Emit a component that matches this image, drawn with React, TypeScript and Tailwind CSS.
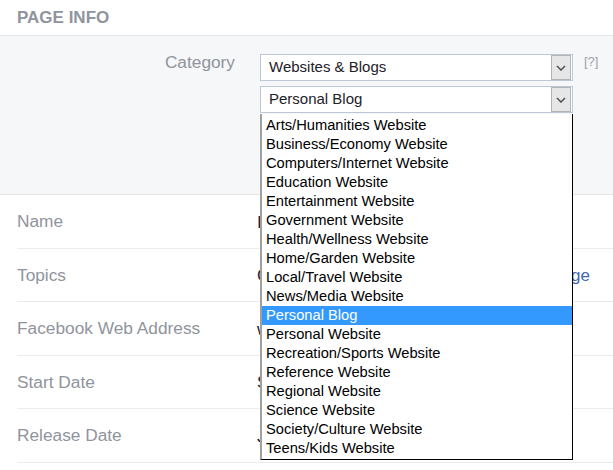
import React from "react";

const OPTIONS = [
  "Arts/Humanities Website",
  "Business/Economy Website",
  "Computers/Internet Website",
  "Education Website",
  "Entertainment Website",
  "Government Website",
  "Health/Wellness Website",
  "Home/Garden Website",
  "Local/Travel Website",
  "News/Media Website",
  "Personal Blog",
  "Personal Website",
  "Recreation/Sports Website",
  "Reference Website",
  "Regional Website",
  "Science Website",
  "Society/Culture Website",
  "Teens/Kids Website",
];

const ROWS = [
  { label: "Name", value: "Inspired Words" },
  { label: "Topics", value: "Choose up to 3 topics", link: "Change" },
  { label: "Facebook Web Address", value: "www.facebook.com/inspiredwords" },
  { label: "Start Date", value: "Started on 2014" },
  { label: "Release Date", value: "January 2014" },
];

function Chevron() {
  return (
    <svg width="10" height="6" viewBox="0 0 10 6" fill="none">
      <path d="M1 1l4 4 4-4" stroke="#555" strokeWidth="1.6" />
    </svg>
  );
}

function FakeSelect({ value }: { value: string }) {
  return (
    <div className="flex h-[27px] w-[313px] items-center border border-[#bdc7d8] bg-white">
      <span className="flex-1 pl-[8px] text-[15px] text-[#1d2129]">{value}</span>
      <span className="mr-[1px] flex h-[25px] w-[20px] items-center justify-center border border-[#b4b4b4] bg-[#e6e6e6]">
        <Chevron />
      </span>
    </div>
  );
}

export default function App() {
  return (
    <div
      className="relative h-[470px] w-[613px] overflow-hidden bg-white"
      style={{ fontFamily: '"Liberation Sans", Arial, sans-serif' }}
    >
      <div className="flex h-[35px] items-center px-[17px] pt-[1px]">
        <h2 className="text-[17px] font-bold text-[#90949c]">PAGE INFO</h2>
      </div>

      <section className="h-[160px] border-y border-[#e5e5e5] bg-[#f6f7f9] pt-[18px]">
        <div className="flex">
          <div className="-mt-[4px] w-[236px] pr-[1px] text-right text-[17.3px] text-[#90949c]">
            Category
          </div>
          <div className="ml-[24px] flex flex-col gap-[5px]">
            <div className="relative">
              <FakeSelect value="Websites & Blogs" />
              <span className="absolute left-[324px] top-[-2px] text-[13px] text-[#a0a3a8]">[?]</span>
            </div>
            <div className="relative z-10">
              <FakeSelect value="Personal Blog" />
              <ul className="absolute left-0 top-[28px] w-[313px] border-b border-l-2 border-r border-b-black border-l-[#a0a0a0] border-r-black bg-white pb-[1px] pt-[2px]">
                {OPTIONS.map((o) => (
                  <li
                    key={o}
                    className={
                      o === "Personal Blog"
                        ? "h-[19px] bg-[#3399ff] pl-[4px] text-[14.7px] leading-[19px] text-white"
                        : "h-[19px] pl-[4px] text-[14.7px] leading-[19px] text-black"
                    }
                  >
                    {o}
                  </li>
                ))}
              </ul>
            </div>
          </div>
        </div>
      </section>

      <div className="pl-[17px]">
        {ROWS.map((r) => (
          <div key={r.label} className="flex h-[53.5px] items-center border-b border-[#e9ebee] pt-[2px]">
            <span className="w-[240px] text-[17.3px] text-[#90949c]">{r.label}</span>
            <span className="flex-1 text-[17px] text-[#1d2129]">{r.value}</span>
            {r.link && (
              <span className="pr-[23px] text-[17px] text-[#4267b2]">{r.link}</span>
            )}
          </div>
        ))}
      </div>
    </div>
  );
}
